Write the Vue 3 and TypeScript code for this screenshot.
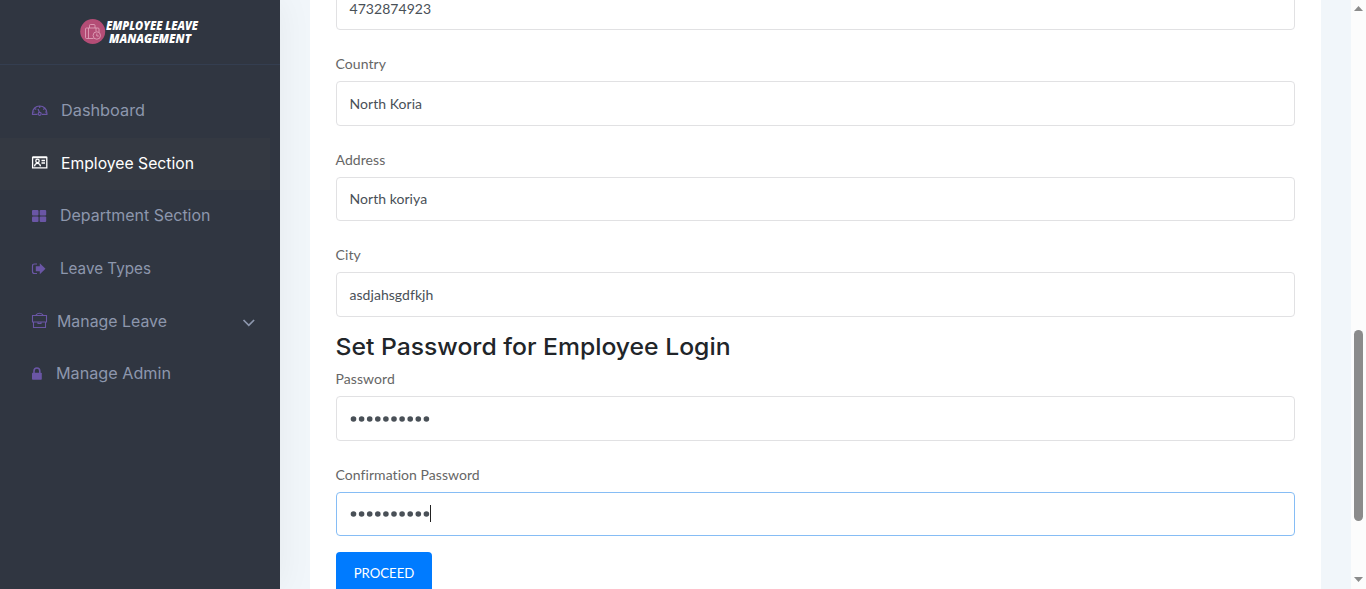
<script setup lang="ts">
interface NavItem {
  label: string
  icon: string
  gap: number
  width: number
  active?: boolean
  expandable?: boolean
}

const items: NavItem[] = [
  { label: 'Dashboard', icon: 'dashboard', gap: 61, width: 84 },
  { label: 'Employee Section', icon: 'card', gap: 61, width: 133, active: true },
  { label: 'Department Section', icon: 'grid', gap: 60, width: 150.5 },
  { label: 'Leave Types', icon: 'exit', gap: 60, width: 91 },
  { label: 'Manage Leave', icon: 'case', gap: 57, width: 110, expandable: true },
  { label: 'Manage Admin', icon: 'lock', gap: 56, width: 115 },
]

const details = [
  { label: 'Country', value: 'North Koria' },
  { label: 'Address', value: 'North koriya' },
  { label: 'City', value: 'asdjahsgdfkjh' },
]
const dots = Array.from({ length: 10 }, (_, i) => 3.5 + i * 8.1)
</script>

<template>
  <div class="page">
    <aside class="sidebar">
      <div class="brand">
        <svg width="124" height="30" viewBox="0 0 124 30">
          <circle cx="12.700" cy="14.500" r="12.500" fill="#b44d76" />
          <g fill="none" stroke="#e3a9c0" stroke-width=".8">
            <path d="M13.500 21.500H6.500q-1 0-1-1V12q0-1 1-1h11.500q1 0 1 1v3M9.500 11V8.500q0-1 1-1h3.500q1 0 1 1V11M8.500 11v10.500M16 11v3.500" />
            <circle cx="16.800" cy="18.500" r="3.700" />
            <path d="M16.800 16.500V19h2" />
          </g>
          <g class="brand-text">
            <text x="26" y="13" font-size="11.500" textLength="92" lengthAdjust="spacingAndGlyphs">EMPLOYEE LEAVE</text>
            <text x="29" y="25.500" font-size="12" textLength="82" lengthAdjust="spacingAndGlyphs">MANAGEMENT</text>
          </g>
        </svg>
      </div>
      <nav>
        <a v-for="item in items" :key="item.label" class="nav-item" :class="{ active: item.active }">
          <span class="nav-icon" :style="{ width: item.gap - 31 + 'px' }">
            <svg v-if="item.icon === 'dashboard'" width="18" height="18" viewBox="0 0 18 18" fill="none" stroke="currentColor" stroke-width="1.200">
              <path d="M6.500 12.300h-5v-1C1.500 7 4.700 4 8.700 4s7.200 3 7.200 7.300v1H11M8.700 4v2M3.800 6.200l1.400 1.300M13.600 6.200l-1.400 1.300M1.500 10h2M16 10h-2M7 7l1.500 3.500" />
              <circle cx="8.700" cy="11.800" r="1.500" />
            </svg>
            <svg v-else-if="item.icon === 'card'" width="18" height="18" viewBox="0 0 18 18" fill="none" stroke="currentColor" stroke-width="1.300">
              <path d="M1.600 3.500h14.200v10.300H1.600zM1.600 3h14.200" />
              <circle cx="6.500" cy="6.900" r="1.700" />
              <path d="M3.500 12.300c.3-2.200 1.500-3 3-3s2.700.8 3 3M10.500 6.500h3.500M10.500 9h3.500" />
            </svg>
            <svg v-else-if="item.icon === 'grid'" width="18" height="18" viewBox="0 0 18 18" fill="currentColor">
              <rect x="1" y="3" width="6.500" height="5.500" rx="1" />
              <rect x="8.700" y="3" width="6.500" height="5.500" rx="1" />
              <rect x="1" y="9.500" width="6.500" height="5.500" rx="1" />
              <rect x="8.700" y="9.500" width="6.500" height="5.500" rx="1" />
            </svg>
            <svg v-else-if="item.icon === 'exit'" width="18" height="18" viewBox="0 0 18 18">
              <path d="M6 4H3.500q-2 0-2 2v5.500q0 2 2 2H6" fill="none" stroke="currentColor" stroke-width="1.200" />
              <path d="M4.800 6.300H8.800V3.300l5.700 5.500-5.700 5.500v-3H4.800z" fill="currentColor" />
            </svg>
            <svg v-else-if="item.icon === 'case'" width="18" height="18" viewBox="0 0 18 18" fill="none" stroke="currentColor" stroke-width="1.100">
              <path d="M1.500 3.500h14v6.500h-14zM2.500 10v5.500h12V10M4.500 3.500C6 3 5 1.200 8.500 1.200s2.500 1.800 4 2.300M7 10v1.500h3V10" />
            </svg>
            <svg v-else width="18" height="18" viewBox="0 0 18 18">
              <path d="M3 8V6q0-3 2.900-3t2.900 3v2" fill="none" stroke="currentColor" stroke-width="1.600" />
              <rect x="1" y="7.700" width="9.800" height="7" rx=".8" fill="currentColor" />
            </svg>
          </span>
          <svg class="nav-label" :width="item.width + 4" height="24">
            <text x="0" y="17" :textLength="item.width" lengthAdjust="spacingAndGlyphs">{{ item.label }}</text>
          </svg>
          <svg v-if="item.expandable" class="chevron" width="14" height="10" viewBox="0 0 14 10" fill="none" stroke="currentColor" stroke-width="1.700">
            <path d="M1.500 2l5.300 5.300L12.100 2" />
          </svg>
        </a>
      </nav>
    </aside>

    <main class="content">
      <section class="card">
        <div class="input phone">4732874923</div>
        <div v-for="field in details" :key="field.label" class="field">
          <div class="label">{{ field.label }}</div>
          <div class="input">{{ field.value }}</div>
        </div>
        <h4 class="heading">
          <svg width="400" height="36">
            <text x="-0.500" y="25" textLength="395" lengthAdjust="spacingAndGlyphs">Set Password for Employee Login</text>
          </svg>
        </h4>
        <div class="field first">
          <div class="label">Password</div>
          <div class="input secret">
            <svg width="81" height="8"><circle v-for="x in dots" :key="x" :cx="x" cy="4" r="2.800" /></svg>
          </div>
        </div>
        <div class="field">
          <div class="label">Confirmation Password</div>
          <div class="input secret focused">
            <svg width="81" height="8"><circle v-for="x in dots" :key="x" :cx="x" cy="4" r="2.800" /></svg>
            <i class="caret"></i>
          </div>
        </div>
        <button class="proceed">PROCEED</button>
      </section>
    </main>

    <div class="scrollbar">
      <svg width="9" height="5" viewBox="0 0 9 5"><path d="M0 5L4.500 0 9 5z" fill="#8b8b8b" /></svg>
      <div class="thumb"></div>
      <svg class="down" width="9" height="5" viewBox="0 0 9 5"><path d="M0 0L4.500 5 9 0z" fill="#8b8b8b" /></svg>
    </div>
  </div>
</template>

<style>
body {
  margin: 0;
  overflow: hidden;
}
</style>

<style scoped>
.page {
  display: flex;
  width: 1366px;
  height: 589px;
  overflow: hidden;
  background: #f1f6fa;
  font-family: Lato, sans-serif;
}
.sidebar {
  flex: 0 0 280px;
  background: #303641;
  box-shadow: 2px 0 32px rgba(0, 0, 0, 0.05);
}
.brand {
  box-sizing: border-box;
  height: 65px;
  padding: 17px 0 0 80px;
  border-bottom: 1px solid #343e50;
}
.brand svg,
.nav-icon svg,
.nav-label {
  display: block;
}
.brand svg {
  overflow: visible;
}
.brand-text {
  fill: #fff;
  font-family: "Open Sans", sans-serif;
  font-style: italic;
  font-weight: 800;
}
nav {
  padding-top: 20px;
}
.nav-item {
  display: flex;
  align-items: center;
  box-sizing: border-box;
  width: 270px;
  height: 52.6px;
  padding-left: 31px;
  color: #8d97ad;
}
.nav-icon {
  margin-top: -1px;
  color: #6a56a5;
}
.nav-label {
  font-family: Inter, sans-serif;
  font-size: 15.5px;
  fill: currentColor;
}
.active,
.active .nav-icon {
  color: #fff;
}
.active {
  background: #343942;
}
.chevron {
  margin: 2px 14px 0 auto;
}
.content {
  flex: 1;
  padding: 0 30px;
}
.card {
  box-sizing: border-box;
  width: 1011px;
  height: 589px;
  padding: 0 26px;
  background: #fff;
  overflow: hidden;
}
.input {
  display: flex;
  align-items: center;
  box-sizing: border-box;
  height: 44.6px;
  padding: 0 12.5px;
  border: 1px solid #e1e1e3;
  border-radius: 4px;
  color: #495057;
  font-size: 14px;
  letter-spacing: 0.05px;
}
.phone {
  margin-top: -14.6px;
  padding-top: 2px;
}
.field {
  padding-top: 23px;
}
.label {
  height: 28px;
  margin-left: -0.4px;
  color: #666;
  font-size: 14px;
  line-height: 22px;
  letter-spacing: 0.05px;
}
.heading {
  height: 36px;
  margin: 13.4px 0 0;
}
.heading svg {
  display: block;
  overflow: visible;
  font-family: Inter, sans-serif;
  font-size: 23.5px;
  font-weight: 500;
  fill: #212529;
}
.first {
  padding-top: 2px;
}
.secret {
  padding-top: 1px;
  padding-left: 13.4px;
  fill: #495057;
}
.caret {
  width: 1px;
  height: 17px;
  margin: -2px 0 0 -1.4px;
  background: #222;
}
.focused {
  padding-top: 0;
  border-color: #86bdf5;
}
.proceed {
  display: block;
  width: 96px;
  height: 43px;
  margin-top: 15.6px;
  padding: 0;
  border: 0;
  border-radius: 4px;
  background: #007bff;
  color: #fff;
  font-family: Lato, sans-serif;
  font-size: 13.2px;
}
.scrollbar {
  display: flex;
  flex: 0 0 15px;
  flex-direction: column;
  align-items: center;
  box-sizing: border-box;
  padding: 6px 0 7px;
  background: #fcfcfc;
}
.thumb {
  width: 9px;
  height: 191px;
  margin-top: 319px;
  border-radius: 5px;
  background: #8b8b8b;
}
.down {
  margin-top: auto;
}
</style>
